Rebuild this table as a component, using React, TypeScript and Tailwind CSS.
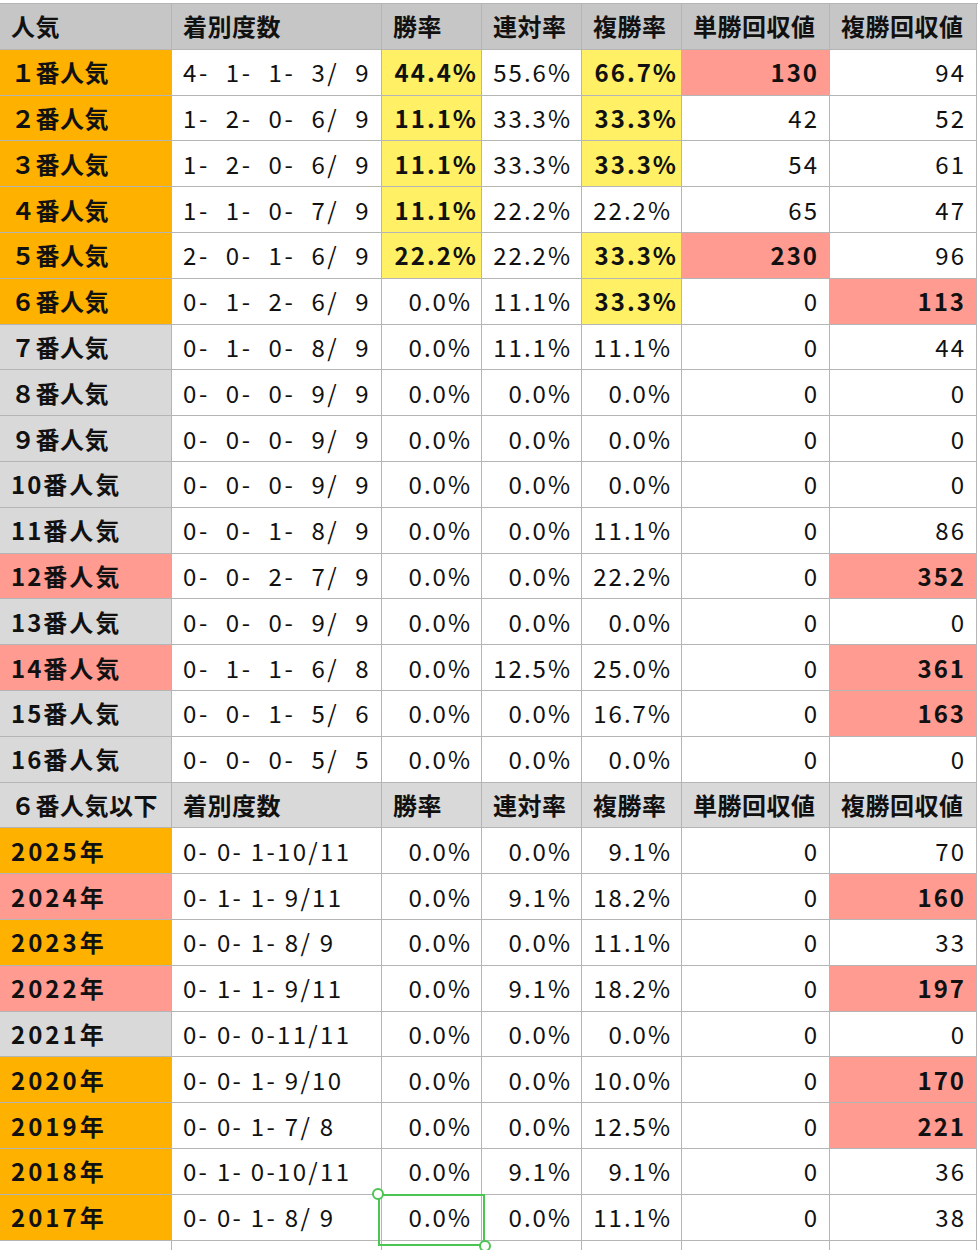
import React from "react";

type Bg = "o" | "g" | "p" | "y" | "w" | "h1" | "h2";

const bgClass: Record<Bg, string> = {
  o: "bg-[#ffb100]",
  g: "bg-[#d9d9d9]",
  p: "bg-[#ff9b91]",
  y: "bg-[#fff066]",
  w: "bg-white",
  h1: "bg-[#c6c6c6]",
  h2: "bg-[#d9d9d9]",
};

type Row = {
  label: string;
  lbg: Bg;
  rec: string;
  v: [string, string, string, string, string];
  hi: [Bg, Bg, Bg, Bg, Bg];
};

const W: [Bg, Bg, Bg, Bg, Bg] = ["w", "w", "w", "w", "w"];

const top: Row[] = [
  { label: "１番人気", lbg: "o", rec: "4-  1-  1-  3/  9", v: ["44.4%", "55.6%", "66.7%", "130", "94"], hi: ["y", "w", "y", "p", "w"] },
  { label: "２番人気", lbg: "o", rec: "1-  2-  0-  6/  9", v: ["11.1%", "33.3%", "33.3%", "42", "52"], hi: ["y", "w", "y", "w", "w"] },
  { label: "３番人気", lbg: "o", rec: "1-  2-  0-  6/  9", v: ["11.1%", "33.3%", "33.3%", "54", "61"], hi: ["y", "w", "y", "w", "w"] },
  { label: "４番人気", lbg: "o", rec: "1-  1-  0-  7/  9", v: ["11.1%", "22.2%", "22.2%", "65", "47"], hi: ["y", "w", "w", "w", "w"] },
  { label: "５番人気", lbg: "o", rec: "2-  0-  1-  6/  9", v: ["22.2%", "22.2%", "33.3%", "230", "96"], hi: ["y", "w", "y", "p", "w"] },
  { label: "６番人気", lbg: "o", rec: "0-  1-  2-  6/  9", v: ["0.0%", "11.1%", "33.3%", "0", "113"], hi: ["w", "w", "y", "w", "p"] },
  { label: "７番人気", lbg: "g", rec: "0-  1-  0-  8/  9", v: ["0.0%", "11.1%", "11.1%", "0", "44"], hi: W },
  { label: "８番人気", lbg: "g", rec: "0-  0-  0-  9/  9", v: ["0.0%", "0.0%", "0.0%", "0", "0"], hi: W },
  { label: "９番人気", lbg: "g", rec: "0-  0-  0-  9/  9", v: ["0.0%", "0.0%", "0.0%", "0", "0"], hi: W },
  { label: "10番人気", lbg: "g", rec: "0-  0-  0-  9/  9", v: ["0.0%", "0.0%", "0.0%", "0", "0"], hi: W },
  { label: "11番人気", lbg: "g", rec: "0-  0-  1-  8/  9", v: ["0.0%", "0.0%", "11.1%", "0", "86"], hi: W },
  { label: "12番人気", lbg: "p", rec: "0-  0-  2-  7/  9", v: ["0.0%", "0.0%", "22.2%", "0", "352"], hi: ["w", "w", "w", "w", "p"] },
  { label: "13番人気", lbg: "g", rec: "0-  0-  0-  9/  9", v: ["0.0%", "0.0%", "0.0%", "0", "0"], hi: W },
  { label: "14番人気", lbg: "p", rec: "0-  1-  1-  6/  8", v: ["0.0%", "12.5%", "25.0%", "0", "361"], hi: ["w", "w", "w", "w", "p"] },
  { label: "15番人気", lbg: "g", rec: "0-  0-  1-  5/  6", v: ["0.0%", "0.0%", "16.7%", "0", "163"], hi: ["w", "w", "w", "w", "p"] },
  { label: "16番人気", lbg: "g", rec: "0-  0-  0-  5/  5", v: ["0.0%", "0.0%", "0.0%", "0", "0"], hi: W },
];

const years: Row[] = [
  { label: "2025年", lbg: "o", rec: "0- 0- 1-10/11", v: ["0.0%", "0.0%", "9.1%", "0", "70"], hi: W },
  { label: "2024年", lbg: "p", rec: "0- 1- 1- 9/11", v: ["0.0%", "9.1%", "18.2%", "0", "160"], hi: ["w", "w", "w", "w", "p"] },
  { label: "2023年", lbg: "o", rec: "0- 0- 1- 8/ 9", v: ["0.0%", "0.0%", "11.1%", "0", "33"], hi: W },
  { label: "2022年", lbg: "p", rec: "0- 1- 1- 9/11", v: ["0.0%", "9.1%", "18.2%", "0", "197"], hi: ["w", "w", "w", "w", "p"] },
  { label: "2021年", lbg: "g", rec: "0- 0- 0-11/11", v: ["0.0%", "0.0%", "0.0%", "0", "0"], hi: W },
  { label: "2020年", lbg: "o", rec: "0- 0- 1- 9/10", v: ["0.0%", "0.0%", "10.0%", "0", "170"], hi: ["w", "w", "w", "w", "p"] },
  { label: "2019年", lbg: "o", rec: "0- 0- 1- 7/ 8", v: ["0.0%", "0.0%", "12.5%", "0", "221"], hi: ["w", "w", "w", "w", "p"] },
  { label: "2018年", lbg: "o", rec: "0- 1- 0-10/11", v: ["0.0%", "9.1%", "9.1%", "0", "36"], hi: W },
  { label: "2017年", lbg: "o", rec: "0- 0- 1- 8/ 9", v: ["0.0%", "0.0%", "11.1%", "0", "38"], hi: W },
];

const rowCls =
  "grid grid-cols-[172px_210px_100px_100px_100px_148px_147px] h-[45.8px]";
const cellBase =
  "border-r border-b border-[#b5b5b5] flex items-center overflow-hidden whitespace-pre";

function labelTracking(label: string) {
  if (label.endsWith("年")) return "tracking-[3px]";
  if (/^[0-9]/.test(label)) return "tracking-[2px]";
  return "tracking-[0.5px]";
}

function Header({ first, bg }: { first: string; bg: Bg }) {
  const heads = ["着別度数", "勝率", "連対率", "複勝率", "単勝回収値", "複勝回収値"];
  return (
    <div className={rowCls}>
      <div className={`${cellBase} ${bgClass[bg]} pl-[11px] font-bold tracking-[0.5px]`}>{first}</div>
      {heads.map((h, i) => (
        <div key={i} className={`${cellBase} ${bgClass[bg]} pl-[11px] font-bold tracking-[0.5px]`}>
          {h}
        </div>
      ))}
    </div>
  );
}

function DataRow({ r, yr }: { r: Row; yr?: boolean }) {
  return (
    <div className={rowCls}>
      <div className={`${cellBase} ${bgClass[r.lbg]} pl-[11px] font-bold ${labelTracking(r.label)}`}>
        {r.label}
      </div>
      <div className={`${cellBase} bg-white pl-[11px] ${yr ? "tracking-[2.3px]" : "tracking-[2.6px]"}`}>
        {r.rec}
      </div>
      {r.v.map((val, i) => {
        const b = r.hi[i];
        const bold = b !== "w";
        const isPct = i < 3;
        const pad = bold && isPct ? "pr-[3px]" : isPct ? "pr-[9px]" : "pr-[10px]";
        return (
          <div
            key={i}
            className={`${cellBase} ${bgClass[b]} justify-end ${pad} tracking-[2px] ${bold ? "font-bold" : "font-normal"}`}
          >
            {val}
          </div>
        );
      })}
    </div>
  );
}

export default function App() {
  return (
    <div className="relative w-[978px] h-[1250px] overflow-hidden bg-white text-[#111] text-[24px] font-['Noto_Sans_CJK_JP','Noto_Sans',sans-serif] leading-none">
      <div className="mt-[3px] border-t border-[#b5b5b5]">
        <Header first="人気" bg="h1" />
        {top.map((r, i) => (
          <DataRow key={i} r={r} />
        ))}
        <Header first="６番人気以下" bg="h2" />
        {years.map((r, i) => (
          <DataRow key={i} r={r} yr />
        ))}
        <div className={rowCls}>
          {[0, 1, 2, 3, 4, 5, 6].map((i) => (
            <div key={i} className={`${cellBase} bg-white`} />
          ))}
        </div>
      </div>
      {/* selection overlay */}
      <div className="absolute left-[378px] top-[1194px] w-[107px] h-[52px] border-2 border-[#4cc552]" />
      <div className="absolute left-[372px] top-[1188px] w-[12px] h-[12px] rounded-full border-2 border-[#4cc552] bg-white" />
      <div className="absolute left-[479px] top-[1240px] w-[12px] h-[12px] rounded-full border-2 border-[#4cc552] bg-white" />
    </div>
  );
}
